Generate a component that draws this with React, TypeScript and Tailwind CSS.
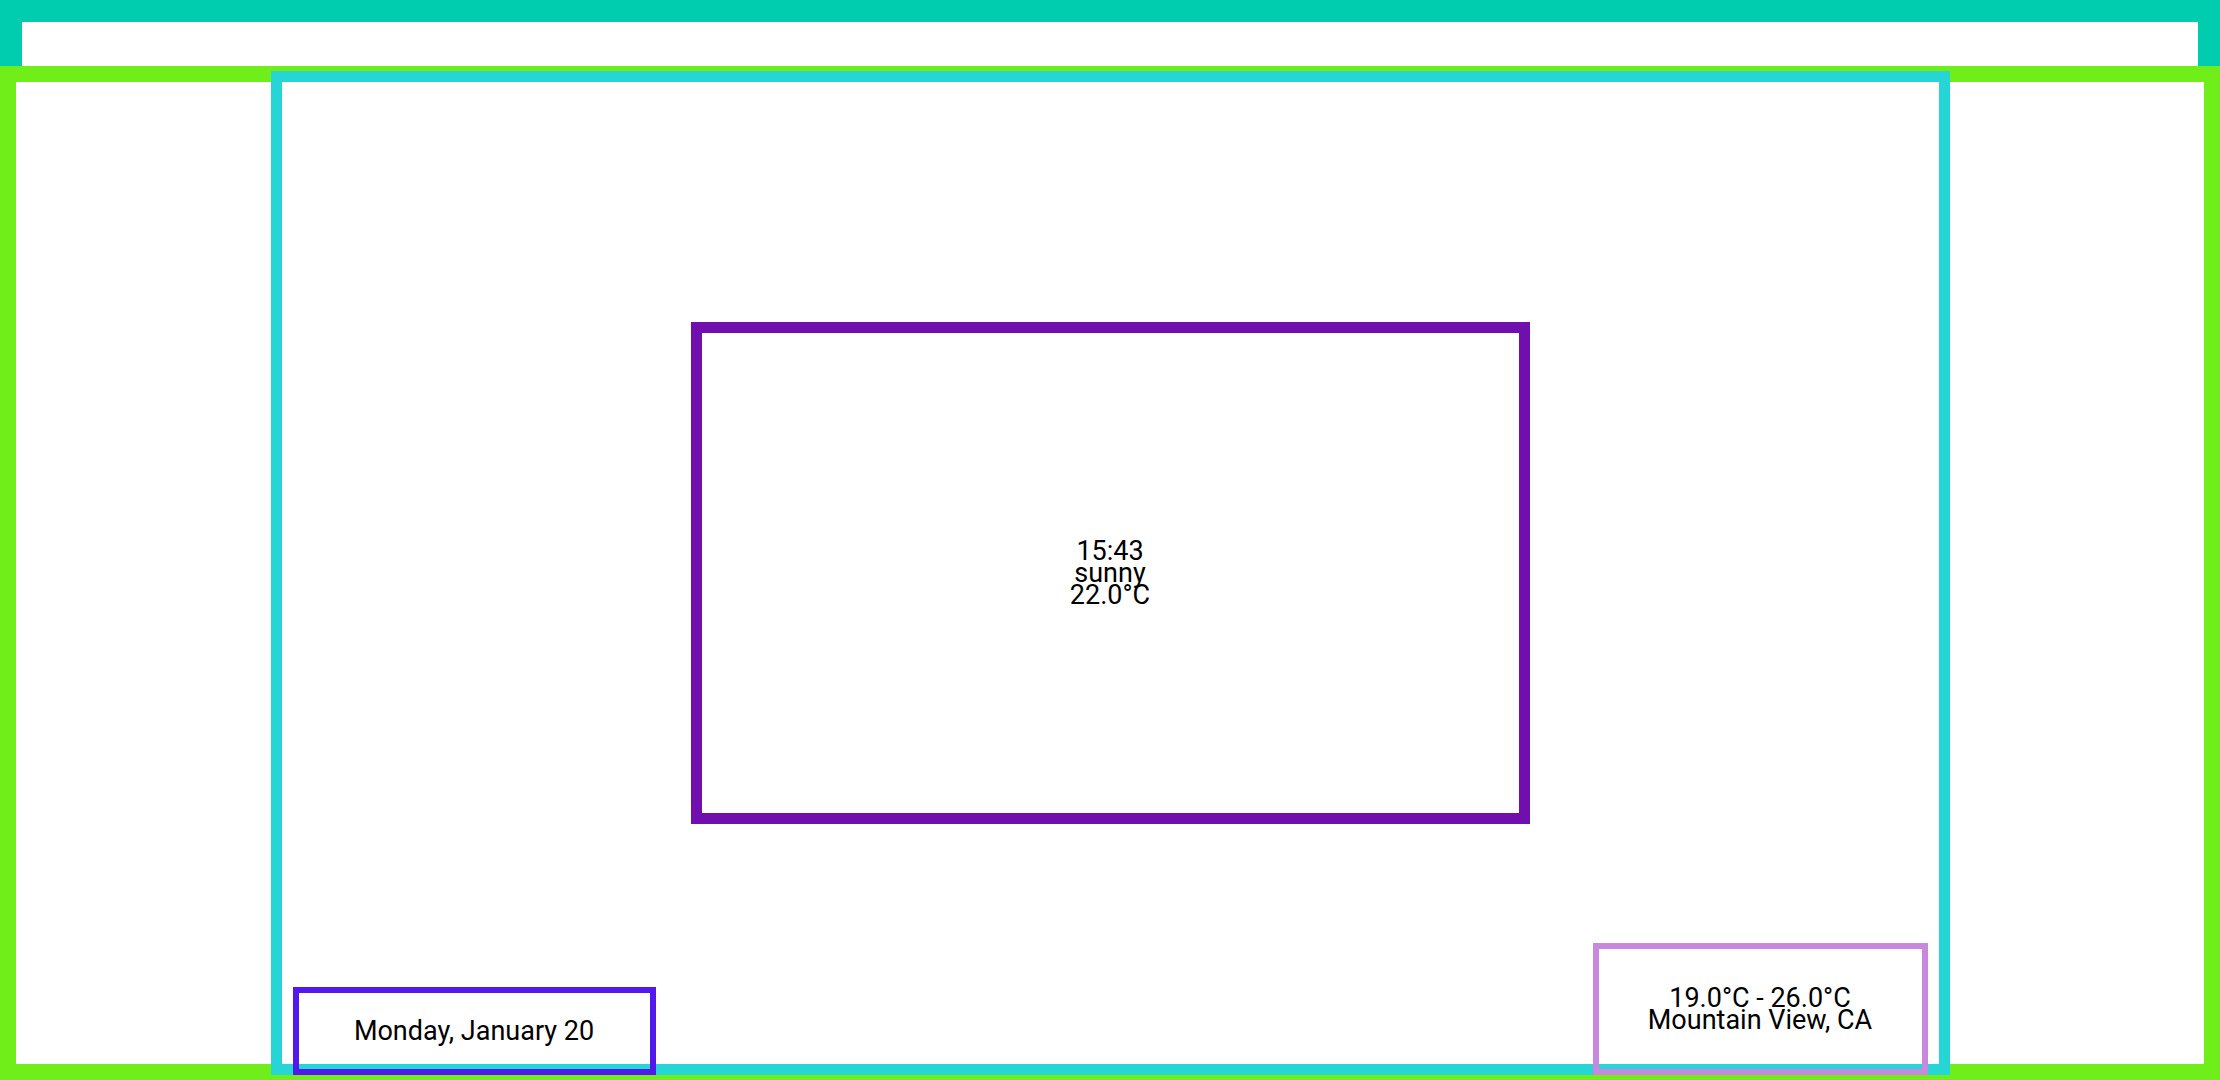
export default function App() {
  return (
    <div className="w-[2220px] h-[1080px] flex flex-col bg-white text-black font-['Roboto',sans-serif] overflow-hidden">
      {/* top bar */}
      <div className="h-[66px] shrink-0 border-[22px] border-b-0 border-[#00ccaf]" />

      {/* main frame */}
      <div className="flex-1 flex justify-center border-[16px] border-[#70ee1a]">
        <div className="w-[1679px] -my-[11px] border-[11px] border-[#26d6d6] grid">
          <div className="col-start-1 row-start-1 place-self-center w-[839px] h-[502px] border-[11px] border-[#700eae] flex flex-col items-center justify-center text-[27px] leading-[22px]">
            <div>15:43</div>
            <div>sunny</div>
            <div>22.0°C</div>
          </div>

          <div className="col-start-1 row-start-1 self-end justify-self-start ml-[11px] -mb-[11px] w-[363px] h-[88px] border-[6px] border-[#5218ee] flex items-center justify-center text-[27px] leading-[22px]">
            Monday, January 20
          </div>

          <div className="col-start-1 row-start-1 self-end justify-self-end mr-[11px] -mb-[11px] w-[335px] h-[132px] border-[6px] border-[#c888dd] flex flex-col items-center justify-center text-[27px] leading-[22px]">
            <div>19.0°C - 26.0°C</div>
            <div>Mountain View, CA</div>
          </div>
        </div>
      </div>
    </div>
  );
}
